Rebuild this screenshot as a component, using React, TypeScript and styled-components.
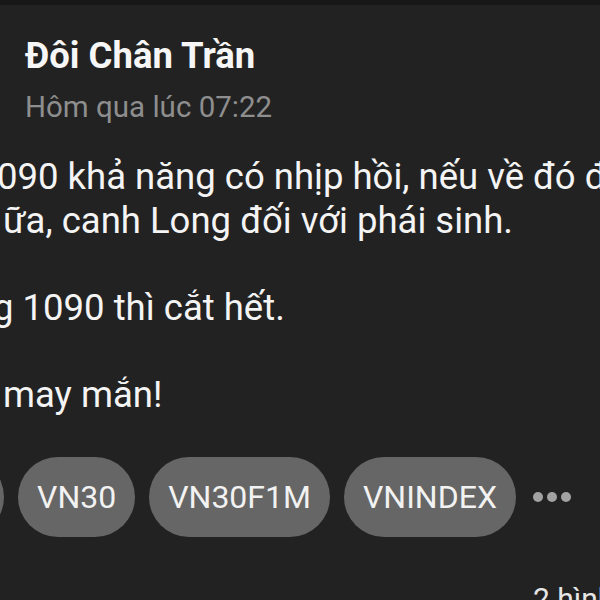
import React from "react";
import styled, { createGlobalStyle } from "styled-components";

const GlobalStyle = createGlobalStyle`
  html, body {
    margin: 0;
    padding: 0;
    background: #222222;
  }
  body {
    font-family: Roboto, "Noto Sans", "Liberation Sans", sans-serif;
  }
`;

const Screen = styled.div`
  width: 600px;
  height: 600px;
  overflow: hidden;
  background: #222222;
  color: #f4f4f4;
  display: flex;
  flex-direction: column;
`;

const StatusStrip = styled.div`
  height: 5px;
  flex-shrink: 0;
  background: #171717;
`;

const Header = styled.header`
  display: flex;
  flex-direction: column;
  gap: 12px;
  padding: 30px 0 0 25px;
`;

const Name = styled.h1`
  margin: 0;
  font-size: 36.5px;
  line-height: 42px;
  font-weight: 700;
  color: #f6f6f6;
`;

const Time = styled.span`
  font-size: 29.5px;
  line-height: 36px;
  color: #8e8e8e;
`;

const Body = styled.div`
  display: flex;
  flex-direction: column;
  margin-top: 30px;
  font-size: 36.5px;
  line-height: 44px;
  color: #f4f4f4;
`;

const Line = styled.p<{ $shift?: number; $gapBefore?: boolean }>`
  margin: 0;
  margin-left: ${(p) => p.$shift ?? 0}px;
  margin-top: ${(p) => (p.$gapBefore ? "43px" : "0")};
  white-space: nowrap;
`;

const ChipRow = styled.div`
  display: flex;
  align-items: center;
  gap: 14px;
  margin-top: 40px;
  margin-left: -88px;
`;

const Chip = styled.span<{ $width?: number }>`
  flex-shrink: 0;
  display: inline-flex;
  align-items: center;
  justify-content: center;
  height: 80px;
  padding: 0 19px;
  box-sizing: border-box;
  width: ${(p) => (p.$width ? `${p.$width}px` : "auto")};
  border-radius: 40px;
  background: #666666;
  color: #f2f2f2;
  font-size: 32px;
  white-space: nowrap;
`;

const More = styled.div`
  display: flex;
  gap: 4px;
  margin-left: 3px;
`;

const Dot = styled.span`
  width: 10px;
  height: 10px;
  border-radius: 50%;
  background: #a2a2a2;
`;

const Footer = styled.div`
  display: flex;
  margin-top: 44px;
  padding-left: 533px;
  font-size: 30px;
  line-height: 36px;
  color: #e6e6e6;
  white-space: nowrap;
`;

const tags = ["VN30", "VN30F1M", "VNINDEX"];

const App: React.FC = () => {
  return (
    <Screen>
      <GlobalStyle />
      <StatusStrip />
      <Header>
        <Name>Đôi Chân Trần</Name>
        <Time>Hôm qua lúc 07:22</Time>
      </Header>
      <Body>
        <Line $shift={-3}>090 khả năng có nhịp hồi, nếu về đó đánh</Line>
        <Line $shift={3}>ữa, canh Long đối với phái sinh.</Line>
        <Line $shift={-7} $gapBefore>
          g 1090 thì cắt hết.
        </Line>
        <Line $shift={3} $gapBefore>
          may mắn!
        </Line>
      </Body>
      <ChipRow>
        <Chip $width={92}>HPG</Chip>
        {tags.map((t) => (
          <Chip key={t}>{t}</Chip>
        ))}
        <More>
          <Dot />
          <Dot />
          <Dot />
        </More>
      </ChipRow>
      <Footer>2 hình ảnh</Footer>
    </Screen>
  );
};

export default App;
